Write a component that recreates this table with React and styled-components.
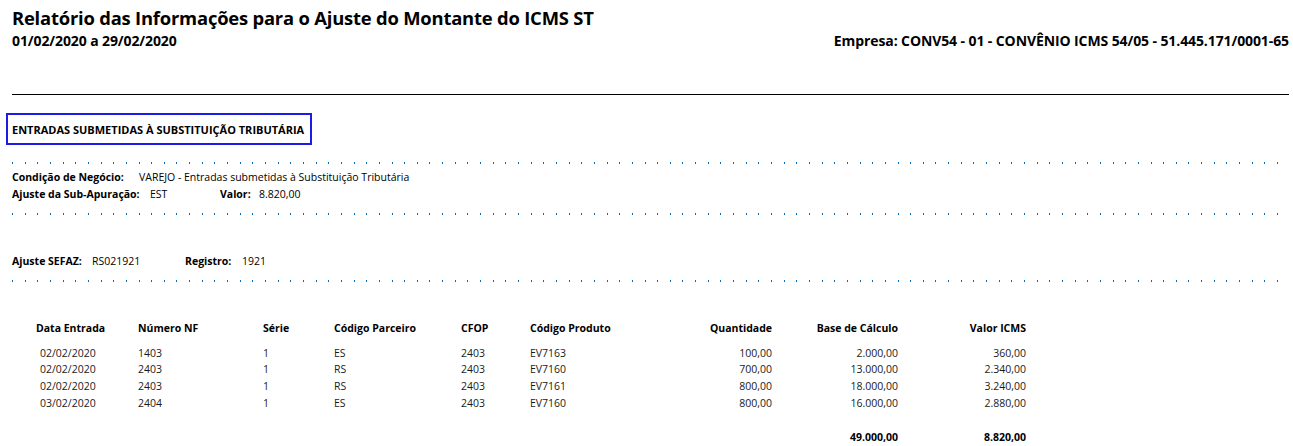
import React from 'react'
import styled, { createGlobalStyle } from 'styled-components'

const GlobalStyle = createGlobalStyle`
  html, body {
    margin: 0;
    padding: 0;
    background: #fff;
  }
  body {
    font-family: "Segoe UI", "Open Sans", "Noto Sans", sans-serif;
    color: #000;
  }
`

const Page = styled.div`
  width: 1293px;
  height: 446px;
  overflow: hidden;
  padding: 6px 4px 0 12px;
  box-sizing: border-box;
`

const Header = styled.div`
  display: flex;
  justify-content: space-between;
  align-items: flex-end;
`

const TitleBlock = styled.div`
  display: flex;
  flex-direction: column;
`

const Title = styled.h1`
  margin: 0;
  font-size: 18.4px;
  font-weight: 700;
  line-height: 24px;
  letter-spacing: -0.2px;
`

const SubTitle = styled.div`
  font-size: 14px;
  font-weight: 700;
  line-height: 22px;
  letter-spacing: -0.1px;
`

const Rule = styled.hr`
  margin: 42px 0 0;
  border: 0;
  border-top: 1px solid #000;
`

const SectionBox = styled.div`
  margin: 18px 0 0 -6px;
  width: 306px;
  height: 32px;
  box-sizing: border-box;
  border: 2px solid #1c1ce6;
  display: flex;
  align-items: center;
  padding-left: 4px;
  font-size: 11px;
  font-weight: 700;
`

const Dots = styled.div`
  height: 2px;
  margin: ${p => p.$top}px 9px 0 0;
  background-image: repeating-linear-gradient(
    to right,
    #0070c0 0 1px,
    transparent 1px 12.65px
  );
`

const InfoGroup = styled.div`
  margin-top: ${p => p.$top}px;
  display: flex;
  flex-direction: column;
  gap: 2px;
`

const InfoRow = styled.div`
  display: flex;
  align-items: baseline;
  font-size: 10.5px;
  line-height: 15px;
`

const Label = styled.span`
  font-weight: 700;
  width: ${p => p.$w}px;
  flex: none;
`

const Value = styled.span`
  width: ${p => (p.$w ? `${p.$w}px` : 'auto')};
  flex: none;
`

const Table = styled.div`
  margin: 38px 0 0 24px;
  display: grid;
  grid-template-columns: 102px 125px 71px 127px 69px 130px 112px 126px 128px;
  font-size: 10.5px;
  line-height: 16.7px;
`

const Th = styled.div`
  font-weight: 700;
  text-align: ${p => (p.$right ? 'right' : 'left')};
  padding-bottom: 8px;
`

const Td = styled.div`
  color: #1a1a1a;
  text-align: ${p => (p.$right ? 'right' : 'left')};
  padding-left: ${p => (p.$indent ? 4 : 0)}px;
`

const Total = styled.div`
  font-weight: 700;
  text-align: right;
  margin-top: 17px;
`

const Blank = styled.div`
  margin-top: 17px;
`

const columns = [
  { title: 'Data Entrada', key: 'data', indent: true },
  { title: 'Número NF', key: 'nf' },
  { title: 'Série', key: 'serie' },
  { title: 'Código Parceiro', key: 'parceiro' },
  { title: 'CFOP', key: 'cfop' },
  { title: 'Código Produto', key: 'produto' },
  { title: 'Quantidade', key: 'qtd', right: true },
  { title: 'Base de Cálculo', key: 'base', right: true },
  { title: 'Valor ICMS', key: 'icms', right: true },
]

const rows = [
  { data: '02/02/2020', nf: '1403', serie: '1', parceiro: 'ES', cfop: '2403', produto: 'EV7163', qtd: '100,00', base: '2.000,00', icms: '360,00' },
  { data: '02/02/2020', nf: '2403', serie: '1', parceiro: 'RS', cfop: '2403', produto: 'EV7160', qtd: '700,00', base: '13.000,00', icms: '2.340,00' },
  { data: '02/02/2020', nf: '2403', serie: '1', parceiro: 'RS', cfop: '2403', produto: 'EV7161', qtd: '800,00', base: '18.000,00', icms: '3.240,00' },
  { data: '03/02/2020', nf: '2404', serie: '1', parceiro: 'ES', cfop: '2403', produto: 'EV7160', qtd: '800,00', base: '16.000,00', icms: '2.880,00' },
]

const totals = { base: '49.000,00', icms: '8.820,00' }

export default function App() {
  return (
    <>
      <GlobalStyle />
      <Page>
        <Header>
          <TitleBlock>
            <Title>Relatório das Informações para o Ajuste do Montante do ICMS ST</Title>
            <SubTitle>01/02/2020 a 29/02/2020</SubTitle>
          </TitleBlock>
          <SubTitle>Empresa: CONV54 - 01 - CONVÊNIO ICMS 54/05 - 51.445.171/0001-65</SubTitle>
        </Header>

        <Rule />

        <SectionBox>ENTRADAS SUBMETIDAS À SUBSTITUIÇÃO TRIBUTÁRIA</SectionBox>

        <Dots $top={17} />
        <InfoGroup $top={6}>
          <InfoRow>
            <Label $w={127}>Condição de Negócio:</Label>
            <Value>VAREJO - Entradas submetidas à Substituição Tributária</Value>
          </InfoRow>
          <InfoRow>
            <Label $w={138}>Ajuste da Sub-Apuração:</Label>
            <Value $w={70}>EST</Value>
            <Label $w={39}>Valor:</Label>
            <Value>8.820,00</Value>
          </InfoRow>
        </InfoGroup>
        <Dots $top={11} />

        <InfoGroup $top={39}>
          <InfoRow>
            <Label $w={80}>Ajuste SEFAZ:</Label>
            <Value $w={93}>RS021921</Value>
            <Label $w={57}>Registro:</Label>
            <Value>1921</Value>
          </InfoRow>
        </InfoGroup>
        <Dots $top={11} />

        <Table>
          {columns.map(c => (
            <Th key={c.key} $right={c.right}>{c.title}</Th>
          ))}
          {rows.map((r, i) =>
            columns.map(c => (
              <Td key={`${i}-${c.key}`} $right={c.right} $indent={c.indent}>
                {r[c.key]}
              </Td>
            ))
          )}
          {columns.map(c =>
            totals[c.key] ? (
              <Total key={`t-${c.key}`}>{totals[c.key]}</Total>
            ) : (
              <Blank key={`t-${c.key}`} />
            )
          )}
        </Table>
      </Page>
    </>
  )
}
